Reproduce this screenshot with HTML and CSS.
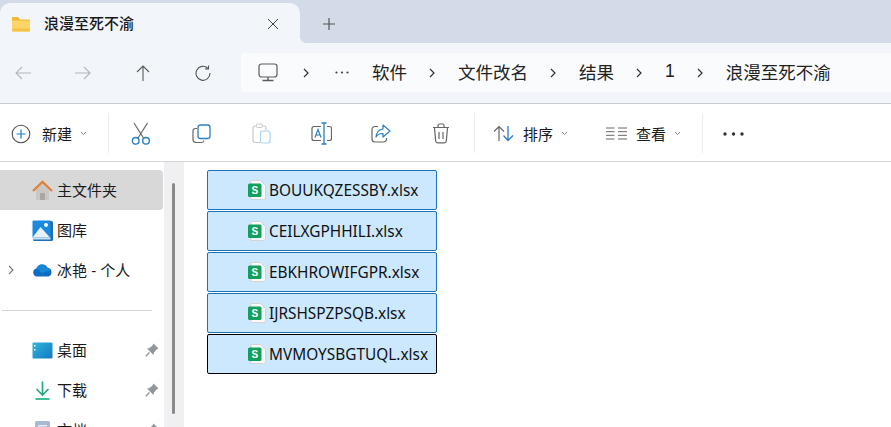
FILE: index.html
```html
<!DOCTYPE html>
<html lang="zh-CN">
<head>
<meta charset="utf-8">
<title>浪漫至死不渝</title>
<link rel="stylesheet" href="styles.css">
</head>
<body>
<div class="tabstrip">
  <div class="tab">
    <svg class="tab-folder" width="20" height="15" viewBox="0 0 20 15"><path d="M1 3V1a1 1 0 0 1 1-1h5l2 2.500h9a1 1 0 0 1 1 1V5H1z" fill="#f2b92e"/><rect x="1" y="3.500" width="18" height="11" rx="1" fill="#fbd667"/><rect x="1" y="11.500" width="18" height="3" rx="1" fill="#f6c445"/></svg>
    <span class="tab-title">浪漫至死不渝</span>
    <svg class="tab-close" width="12" height="12" viewBox="0 0 12 12"><path d="M1 1l10 10M11 1L1 11" stroke="#444" stroke-width="1" fill="none"/></svg>
  </div>
  <svg class="tab-new" width="14" height="14" viewBox="0 0 14 14"><path d="M7 1v12M1 7h12" stroke="#555" stroke-width="1.2" fill="none"/></svg>
</div>

<div class="navbar">
  <div class="navbtns">
    <span class="navbtn"><svg width="18" height="16" viewBox="0 0 18 16"><path d="M17 8H2M8 2L2 8l6 6" stroke="#b4b6ba" stroke-width="1.1" fill="none"/></svg></span>
    <span class="navbtn"><svg width="18" height="16" viewBox="0 0 18 16"><path d="M1 8h15M10 2l6 6-6 6" stroke="#b4b6ba" stroke-width="1.1" fill="none"/></svg></span>
    <span class="navbtn"><svg width="16" height="18" viewBox="0 0 16 18"><path d="M8 17V2M2 8l6-6 6 6" stroke="#5a5a5a" stroke-width="1.1" fill="none"/></svg></span>
    <span class="navbtn"><svg width="16" height="16" viewBox="0 0 16 16"><path d="M12.8 3.2A7 7 0 1 0 15 8" stroke="#555" stroke-width="1.1" fill="none"/><path d="M13.5 .5v3.4h-3.4" stroke="#555" stroke-width="1.1" fill="none"/></svg></span>
  </div>
  <div class="address">
    <svg class="pc" width="20" height="19" viewBox="0 0 20 19"><rect x="1" y="1" width="18" height="13" rx="2.5" fill="none" stroke="#5c5c5c" stroke-width="1.2"/><path d="M10 14v3M4.5 17.5h11" stroke="#5c5c5c" stroke-width="1.4" fill="none"/></svg>
    <svg class="crumb-sep first" width="6" height="10" viewBox="0 0 6 10"><path d="M1 1l4 4-4 4" stroke="#333" stroke-width="1.2" fill="none"/></svg>
    <svg class="dots" width="14" height="3" viewBox="0 0 14 3"><circle cx="1.5" cy="1.5" r="1.1" fill="#444"/><circle cx="7" cy="1.5" r="1.1" fill="#444"/><circle cx="12.5" cy="1.5" r="1.1" fill="#444"/></svg>
    <span class="crumb">软件</span>
    <svg class="crumb-sep" width="6" height="10" viewBox="0 0 6 10"><path d="M1 1l4 4-4 4" stroke="#333" stroke-width="1.2" fill="none"/></svg>
    <span class="crumb">文件改名</span>
    <svg class="crumb-sep" width="6" height="10" viewBox="0 0 6 10"><path d="M1 1l4 4-4 4" stroke="#333" stroke-width="1.2" fill="none"/></svg>
    <span class="crumb">结果</span>
    <svg class="crumb-sep" width="6" height="10" viewBox="0 0 6 10"><path d="M1 1l4 4-4 4" stroke="#333" stroke-width="1.2" fill="none"/></svg>
    <span class="crumb">1</span>
    <svg class="crumb-sep" width="6" height="10" viewBox="0 0 6 10"><path d="M1 1l4 4-4 4" stroke="#333" stroke-width="1.2" fill="none"/></svg>
    <span class="crumb">浪漫至死不渝</span>
  </div>
</div>

<div class="toolbar">
  <div class="tool tool-new">
    <svg width="20" height="20" viewBox="0 0 20 20"><circle cx="10" cy="10" r="8.8" fill="none" stroke="#555" stroke-width="1.1"/><path d="M10 5.5v9M5.500 10h9" stroke="#1f7fc4" stroke-width="1.2" fill="none"/></svg>
    <span class="tool-label">新建</span>
    <svg class="caret" width="7" height="5" viewBox="0 0 7 5"><path d="M1 1l2.500 2.500L6 1" stroke="#777" stroke-width=".9" fill="none"/></svg>
  </div>
  <span class="divider"></span>
  <div class="iconbtns">
    <span class="iconbtn"><svg width="20" height="23" viewBox="0 0 20 23"><path d="M3 1l9.500 15M16.500 1L7 16" stroke="#666" stroke-width="1.2" fill="none"/><circle cx="4.700" cy="18.800" r="3.300" fill="none" stroke="#2a7fc1" stroke-width="1.4"/><circle cx="15" cy="18.800" r="3.300" fill="none" stroke="#2a7fc1" stroke-width="1.4"/></svg></span>
    <span class="iconbtn"><svg width="19" height="20" viewBox="0 0 19 20"><path d="M5 4.500H3.500A2.500 2.500 0 0 0 1 7v8.500A3 3 0 0 0 4 18.500h5.500A2.500 2.500 0 0 0 12 16.500" fill="none" stroke="#666" stroke-width="1.2"/><rect x="6" y="1" width="12" height="13.500" rx="2.500" fill="none" stroke="#2a7fc1" stroke-width="1.3"/></svg></span>
    <span class="iconbtn"><svg width="19" height="21" viewBox="0 0 19 21"><path d="M8 19.500H3a2 2 0 0 1-2-2V5a2 2 0 0 1 2-2h9a2 2 0 0 1 2 2v2.500" fill="none" stroke="#c9c9c9" stroke-width="1.2"/><rect x="4.500" y="1" width="6" height="3.500" rx="1" fill="#fff" stroke="#c9c9c9"/><rect x="8.500" y="8" width="9.500" height="12" rx="2" fill="none" stroke="#a9d3ee" stroke-width="1.2"/></svg></span>
    <span class="iconbtn"><svg width="21" height="23" viewBox="0 0 21 23"><path d="M10 4.500H3a2 2 0 0 0-2 2v10a2 2 0 0 0 2 2h7M16 4.500h2.500a2 2 0 0 1 2 2v10a2 2 0 0 1-2 2H16" fill="none" stroke="#666" stroke-width="1.2"/><path d="M13 1v21M10.500 1h5M10.500 22h5" stroke="#2a7fc1" stroke-width="1.3" fill="none"/><path d="M4 15.500l3-8 3 8M5 13h4" stroke="#2a7fc1" stroke-width="1.2" fill="none"/></svg></span>
    <span class="iconbtn"><svg width="20" height="19" viewBox="0 0 20 19"><path d="M7 2.500H4a3 3 0 0 0-3 3V15a3 3 0 0 0 3 3h8.500a3 3 0 0 0 3-3v-1" fill="none" stroke="#666" stroke-width="1.2"/><path d="M12 1l7 6-7 6V9.500C9 9.300 6.800 10.500 5 13c.5-4.500 3-7.500 7-8z" fill="none" stroke="#2a7fc1" stroke-width="1.2" stroke-linejoin="round"/></svg></span>
    <span class="iconbtn"><svg width="18" height="21" viewBox="0 0 18 21"><path d="M1 4.500h16M6 4V2.500A1.500 1.500 0 0 1 7.500 1h3A1.500 1.500 0 0 1 12 2.500V4" fill="none" stroke="#666" stroke-width="1.2"/><path d="M2.500 5l1.200 13a2 2 0 0 0 2 1.800h6.600a2 2 0 0 0 2-1.800L15.500 5" fill="none" stroke="#666" stroke-width="1.200"/><path d="M7 9v7M11 9v7" stroke="#666" stroke-width="1.200" fill="none"/></svg></span>
  </div>
  <span class="divider div-b"></span>
  <div class="tool tool-sort">
    <svg width="21" height="17" viewBox="0 0 21 17"><path d="M6 16V1.500M1 6.500l5-5 5 5" stroke="#666" stroke-width="1.200" fill="none"/><path d="M15 1v14.500M10.500 10.500l4.500 5 5-5" stroke="#2a7fc1" stroke-width="1.300" fill="none"/></svg>
    <span class="tool-label">排序</span>
    <svg class="caret" width="7" height="5" viewBox="0 0 7 5"><path d="M1 1l2.500 2.500L6 1" stroke="#777" stroke-width=".9" fill="none"/></svg>
  </div>
  <div class="tool tool-view">
    <svg width="21" height="13" viewBox="0 0 21 13"><path d="M0 1h8.500M0 4.700h8.500M0 8.300h8.500M0 12h8.500M12 1h9M12 4.700h9M12 8.300h9M12 12h9" stroke="#666" stroke-width="1" fill="none"/></svg>
    <span class="tool-label">查看</span>
    <svg class="caret" width="7" height="5" viewBox="0 0 7 5"><path d="M1 1l2.500 2.500L6 1" stroke="#777" stroke-width=".9" fill="none"/></svg>
  </div>
  <span class="divider div-c"></span>
  <svg class="more" width="21" height="4" viewBox="0 0 21 4"><circle cx="2" cy="2" r="1.700" fill="#333"/><circle cx="10.500" cy="2" r="1.700" fill="#333"/><circle cx="19" cy="2" r="1.700" fill="#333"/></svg>
</div>

<div class="main">
  <nav class="sidebar">
    <div class="side-row selected">
      <svg class="side-icon" width="21" height="21" viewBox="0 0 21 21"><path d="M4 10v10h13V10l-6.500-6z" fill="#c9c7c5"/><rect x="8" y="13" width="5" height="7" fill="#a9a6a3"/><path d="M1 11l9.500-9L20 11" fill="none" stroke="#e0813a" stroke-width="2.400"/></svg>
      <span class="side-label">主文件夹</span>
    </div>
    <div class="side-row">
      <svg class="side-icon" width="21" height="21" viewBox="0 0 21 21"><rect x="1" y="1" width="20" height="20" rx="1.500" fill="#1d6fb8"/><path d="M0.500 1.500A1 1 0 0 1 1.500 .5H18.500V17.500H.5z" fill="#1a8ae0"/><path d="M.5 17.500L8.500 7l9.500 10.500z" fill="#e8f2fb"/><circle cx="14" cy="5" r="2" fill="#fff"/><rect x=".5" y="17.500" width="18" height="2" fill="#c9e2f6"/></svg>
      <span class="side-label">图库</span>
    </div>
    <div class="side-row">
      <svg class="side-chevron" width="6" height="10" viewBox="0 0 6 10"><path d="M1 1l4 4-4 4" stroke="#777" stroke-width="1.100" fill="none"/></svg>
      <svg class="side-icon" width="21" height="21" viewBox="0 0 21 21"><path d="M5 16.500a4 4 0 0 1-.6-7.900A6 6 0 0 1 15.500 7.800a4.500 4.500 0 0 1 1 8.700z" fill="#0f6cc4"/><path d="M4.400 8.600A6 6 0 0 1 15.500 7.800 4.500 4.500 0 0 1 19 10L10 13z" fill="#1787d8"/></svg>
      <span class="side-label">冰艳 - 个人</span>
    </div>
    <div class="side-sep"></div>
    <div class="side-row">
      <svg class="side-icon" width="21" height="21" viewBox="0 0 21 21"><defs><linearGradient id="desk" x1="0" y1="0" x2="1" y2="1"><stop offset="0" stop-color="#2fb6d8"/><stop offset="1" stop-color="#1478c4"/></linearGradient></defs><rect x=".5" y="2.500" width="20" height="16" rx="1" fill="url(#desk)"/><rect x="2" y="5" width="1.500" height="1.500" fill="#dff"/><rect x="2" y="9" width="1.500" height="1.500" fill="#dff"/></svg>
      <span class="side-label">桌面</span>
      <svg class="pin" width="14" height="14" viewBox="0 0 14 14"><path d="M8.500 .5L13.500 5.500 11.500 6.500 9 9.500 8.500 12 2 5.500 4.500 5 7.500 2.500z" fill="#8f969c"/><path d="M4.500 9.500L.8 13.200" stroke="#8f969c" stroke-width="1.400"/></svg>
    </div>
    <div class="side-row">
      <svg class="side-icon" width="21" height="21" viewBox="0 0 21 21"><path d="M10.500 1.500v13M4.500 9l6 6 6-6" stroke="#2aa583" stroke-width="1.700" fill="none"/><path d="M3.500 19h14" stroke="#2fb58f" stroke-width="1.800"/></svg>
      <span class="side-label">下载</span>
      <svg class="pin" width="14" height="14" viewBox="0 0 14 14"><path d="M8.500 .5L13.500 5.500 11.500 6.500 9 9.500 8.500 12 2 5.500 4.500 5 7.500 2.500z" fill="#8f969c"/><path d="M4.500 9.500L.8 13.200" stroke="#8f969c" stroke-width="1.400"/></svg>
    </div>
    <div class="side-row">
      <svg class="side-icon" width="21" height="21" viewBox="0 0 21 21"><rect x="3" y="1" width="15" height="19" rx="1.500" fill="#a8b9d1"/><rect x="6" y="5" width="9" height="1.500" fill="#e6edf6"/></svg>
      <span class="side-label">文档</span>
      <svg class="pin" width="14" height="14" viewBox="0 0 14 14"><path d="M8.500 .5L13.500 5.500 11.500 6.500 9 9.500 8.500 12 2 5.500 4.500 5 7.500 2.500z" fill="#8f969c"/><path d="M4.500 9.500L.8 13.200" stroke="#8f969c" stroke-width="1.400"/></svg>
    </div>
  </nav>
  <div class="scrolltrack"><span class="scrollthumb"></span></div>
  <div class="content">
    <div class="file"><svg class="sheet" width="18" height="20" viewBox="0 0 18 20"><path d="M3 .5h9.500l5 5v12a2 2 0 0 1-2 2H3z" fill="#fafafa" stroke="#d4d4d4"/><rect x="0" y="3.500" width="13.500" height="13.500" rx="1.500" fill="#12a05c"/><text class="sheet-s" x="6.800" y="14">S</text></svg><span class="file-name">BOUUKQZESSBY.xlsx</span></div>
    <div class="file"><svg class="sheet" width="18" height="20" viewBox="0 0 18 20"><path d="M3 .5h9.500l5 5v12a2 2 0 0 1-2 2H3z" fill="#fafafa" stroke="#d4d4d4"/><rect x="0" y="3.500" width="13.500" height="13.500" rx="1.500" fill="#12a05c"/><text class="sheet-s" x="6.800" y="14">S</text></svg><span class="file-name">CEILXGPHHILI.xlsx</span></div>
    <div class="file"><svg class="sheet" width="18" height="20" viewBox="0 0 18 20"><path d="M3 .5h9.500l5 5v12a2 2 0 0 1-2 2H3z" fill="#fafafa" stroke="#d4d4d4"/><rect x="0" y="3.500" width="13.500" height="13.500" rx="1.500" fill="#12a05c"/><text class="sheet-s" x="6.800" y="14">S</text></svg><span class="file-name">EBKHROWIFGPR.xlsx</span></div>
    <div class="file"><svg class="sheet" width="18" height="20" viewBox="0 0 18 20"><path d="M3 .5h9.500l5 5v12a2 2 0 0 1-2 2H3z" fill="#fafafa" stroke="#d4d4d4"/><rect x="0" y="3.500" width="13.500" height="13.500" rx="1.500" fill="#12a05c"/><text class="sheet-s" x="6.800" y="14">S</text></svg><span class="file-name">IJRSHSPZPSQB.xlsx</span></div>
    <div class="file focused"><svg class="sheet" width="18" height="20" viewBox="0 0 18 20"><path d="M3 .5h9.500l5 5v12a2 2 0 0 1-2 2H3z" fill="#fafafa" stroke="#d4d4d4"/><rect x="0" y="3.500" width="13.500" height="13.500" rx="1.500" fill="#12a05c"/><text class="sheet-s" x="6.800" y="14">S</text></svg><span class="file-name">MVMOYSBGTUQL.xlsx</span></div>
  </div>
</div>
</body>
</html>
```

FILE: styles.css
```css
* { box-sizing: border-box; }
html, body { margin: 0; height: 100%; overflow: hidden; }
body {
  background: #fff;
  color: #1a1a1a;
  font-family: "Liberation Sans", "Noto Sans CJK SC", sans-serif;
  display: flex;
  flex-direction: column;
}
svg { display: block; flex: none; }

.tabstrip {
  height: 43px;
  flex: none;
  background: #d3dbe8;
  display: flex;
  align-items: flex-end;
}
.tab {
  width: 300px;
  height: 40px;
  background: #f2f5fa;
  border-radius: 10px 10px 0 0;
  display: flex;
  align-items: center;
  padding-left: 11px;
  position: relative;
}
.tab::after {
  content: "";
  position: absolute;
  right: -6px;
  bottom: 0;
  width: 6px;
  height: 6px;
  background: radial-gradient(circle at 100% 0, transparent 5.5px, #f2f5fa 6px);
}
.tab-folder { margin-top: 2px; }
.tab-title { font-size: 15px; margin: 0 0 2px 13px; font-weight: 500; width: 223px; }
.tab-close { margin-top: 2px; }
.tab-new { margin: 0 0 12px 22px; }

.navbar {
  height: 60px;
  flex: none;
  background: #f2f5fa;
  display: flex;
  align-items: flex-start;
  padding-top: 10px;
}
.navbtns { display: flex; margin: 0 8px 0 -7px; flex: none; }
.navbtn { width: 60px; height: 39px; display: flex; align-items: center; justify-content: center; }
.address {
  flex: 1;
  height: 39px;
  background: #f9fbfd;
  border-radius: 4px 0 0 4px;
  display: flex;
  align-items: center;
  padding-left: 17px;
}
.crumb { font-size: 17.5px; color: #222; white-space: nowrap; margin-bottom: 2px; }
.crumb-sep { margin: 0 23px 0 22px; }
.crumb-sep.first { margin: 0 26px 0 25px; }
.dots { margin-right: 23px; }

.toolbar {
  height: 59px;
  flex: none;
  background: #fff;
  border-top: 1px solid #c9ccd1;
  border-bottom: 1px solid #d4d6da;
  display: flex;
  align-items: center;
}
.tool { display: flex; align-items: center; margin-top: 2px; }
.tool-label { font-size: 15px; margin-left: 11px; }
.tool-new { padding-left: 11px; width: 108px; }
.caret { margin-left: 8px; }
.divider { width: 1px; height: 40px; background: #ececec; flex: none; }
.iconbtns { display: flex; margin: 2px 0 0 2px; }
.iconbtn { width: 60px; height: 40px; display: flex; align-items: center; justify-content: center; }
.div-b { margin-left: 3px; }
.tool-sort { margin-left: 18px; }
.tool-sort .tool-label { margin-left: 9px; }
.tool-view { margin-left: 38px; }
.tool-view .tool-label { margin-left: 9px; }
.div-c { margin-left: 21px; }
.more { margin: 2px 0 0 20px; }

.main { flex: 1; display: flex; min-height: 0; overflow: hidden; }
.sidebar { width: 164px; flex: none; padding-top: 8px; }
.side-row {
  height: 40px;
  display: flex;
  align-items: center;
  position: relative;
  padding-left: 32px;
  width: 163px;
}
.side-row.selected { background: #d8d8d8; border-radius: 0 4px 4px 0; }
.side-icon { margin-right: 4px; }
.side-label { font-size: 15px; white-space: nowrap; margin-bottom: 2px; }
.side-chevron { position: absolute; left: 8px; top: 15px; }
.pin { position: absolute; left: 145px; top: 13px; }
.side-sep { height: 1px; width: 150px; margin: 20px 0 19px 2px; background: #d6d6da; }

.scrolltrack { width: 20px; flex: none; background: #f0f0f2; padding: 21px 0 0 8px; }
.scrollthumb { display: block; width: 3px; height: 231px; background: #8a8a8a; border-radius: 2px; }

.content { flex: 1; padding: 8px 0 0 23px; display: flex; flex-direction: column; gap: 1px; }
.file {
  width: 230px;
  height: 40px;
  background: #cce8ff;
  border: 1px solid #1a72b8;
  border-radius: 2px;
  display: flex;
  align-items: center;
  padding-left: 40px;
}
.file.focused { border-color: #000; }
.sheet { margin-right: 3px; }
.sheet-s { font: 700 10px "Liberation Sans", sans-serif; fill: #fff; text-anchor: middle; }
.file-name { font-family: "Noto Sans", sans-serif; font-size: 15.4px; white-space: nowrap; color: #111; }
```
